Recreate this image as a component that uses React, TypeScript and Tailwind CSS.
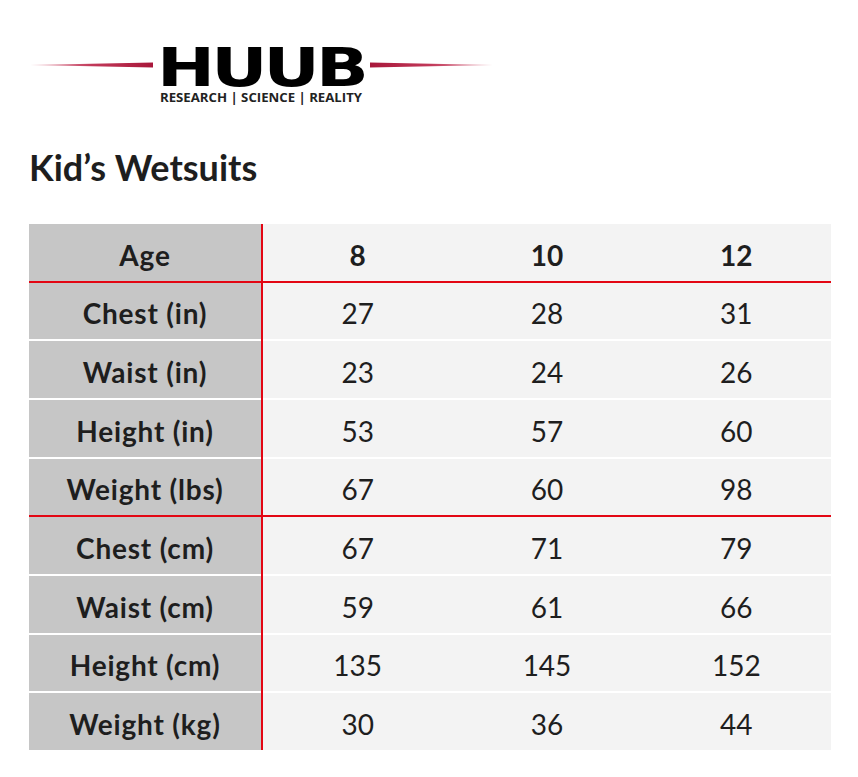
import React from "react";

type Row = { label: string; v: [string, string, string]; head?: boolean };

const rows: Row[] = [
  { label: "Age", v: ["8", "10", "12"], head: true },
  { label: "Chest (in)", v: ["27", "28", "31"] },
  { label: "Waist (in)", v: ["23", "24", "26"] },
  { label: "Height (in)", v: ["53", "57", "60"] },
  { label: "Weight (lbs)", v: ["67", "60", "98"] },
  { label: "Chest (cm)", v: ["67", "71", "79"] },
  { label: "Waist (cm)", v: ["59", "61", "66"] },
  { label: "Height (cm)", v: ["135", "145", "152"] },
  { label: "Weight (kg)", v: ["30", "36", "44"] },
];

function Logo() {
  return (
    <svg width="520" height="70" viewBox="0 40 520 70" className="block">
      <defs>
        <linearGradient id="gl" x1="0" x2="1" y1="0" y2="0">
          <stop offset="0" stopColor="#eab0bd" />
          <stop offset="0.5" stopColor="#c23a5a" />
          <stop offset="1" stopColor="#a8173a" />
        </linearGradient>
        <linearGradient id="gr" x1="1" x2="0" y1="0" y2="0">
          <stop offset="0" stopColor="#eab0bd" />
          <stop offset="0.5" stopColor="#c23a5a" />
          <stop offset="1" stopColor="#a8173a" />
        </linearGradient>
      </defs>
      <polygon points="30,65 153,62.5 153,67.5" fill="url(#gl)" />
      <polygon points="493,65 370,62.5 370,67.5" fill="url(#gr)" />
      <text
        x="157"
        y="86"
        textLength="208"
        lengthAdjust="spacingAndGlyphs"
        letterSpacing="-3"
        fontFamily="'DejaVu Sans', sans-serif"
        fontWeight="bold"
        fontSize="54"
        fill="#000"
      >
        HUUB
      </text>
      <text
        x="160"
        y="102"
        textLength="202"
        lengthAdjust="spacingAndGlyphs"
        fontFamily="'Open Sans', sans-serif"
        fontWeight="bold"
        fontSize="12.5"
        fill="#222"
      >
        RESEARCH | SCIENCE | REALITY
      </text>
    </svg>
  );
}

function Sep({ red }: { red: boolean }) {
  if (red) return <div className="h-[2px] bg-[#e30613]" />;
  return (
    <div className="flex h-[2px]">
      <div className="w-[232px] bg-white" />
      <div className="w-[2px] bg-[#e30613]" />
      <div className="flex-1 bg-white" />
    </div>
  );
}

export default function App() {
  return (
    <div
      className="w-[858px] h-[777px] bg-white text-[#1e1e1e]"
      style={{ fontFamily: "Lato, 'Open Sans', sans-serif" }}
    >
      <div className="pt-[40px]">
        <Logo />
      </div>
      <h1 className="ml-[29px] mt-[37px] text-[36px] leading-[40px] font-bold">
        Kid’s Wetsuits
      </h1>
      <div className="ml-[29px] mt-[37px] w-[802px]">
        {rows.map((r, i) => (
          <React.Fragment key={r.label}>
            {i > 0 && <Sep red={i === 1 || i === 5} />}
            <div className="flex h-[56.67px]">
              <div className="w-[232px] bg-[#c6c6c6] flex items-center justify-center pt-[5px] text-[28px] leading-[34px] font-bold tracking-[0.8px]">
                {r.label}
              </div>
              <div className="w-[2px] bg-[#e30613]" />
              {r.v.map((v, j) => (
                <div
                  key={j}
                  className={`flex-1 bg-[#f3f3f3] flex items-center justify-center pt-[5px] text-[28px] leading-[34px] ${
                    r.head ? "font-bold" : "font-normal"
                  }`}
                >
                  {v}
                </div>
              ))}
            </div>
          </React.Fragment>
        ))}
      </div>
    </div>
  );
}
